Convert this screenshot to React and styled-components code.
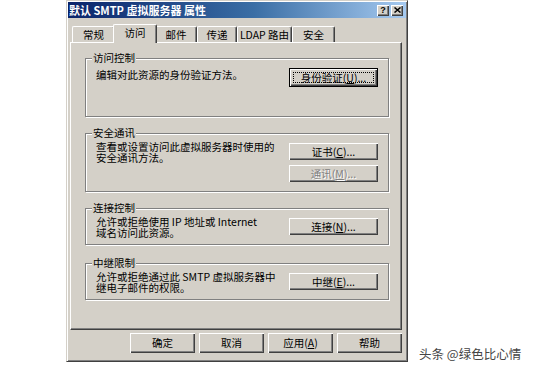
import React from "react";
import styled, { createGlobalStyle, css } from "styled-components";

const Global = createGlobalStyle`
  html, body { margin: 0; padding: 0; background: #fff; }
  body { font-family: "Noto Sans CJK SC", "Noto Sans", sans-serif; }
`;

const FACE = "#d4d0c8";

const Page = styled.div`
  width: 542px;
  height: 374px;
  box-sizing: border-box;
  padding-left: 66px;
  display: flex;
  align-items: flex-start;
  overflow: hidden;
`;

const Dialog = styled.div`
  width: 342px;
  height: 362px;
  box-sizing: border-box;
  background: ${FACE};
  border: 1px solid;
  border-color: ${FACE} #404040 #404040 ${FACE};
  box-shadow: inset 1px 1px 0 #fff, inset -1px -1px 0 #808080;
  padding: 1px;
  display: flex;
  flex-direction: column;
`;

const TitleBar = styled.div`
  height: 16px;
  flex: none;
  display: flex;
  align-items: center;
  padding: 0 3px 0 1px;
  background: linear-gradient(to right, #0a246a, #3a6ea5 55%, #a6caf0);
  color: #fff;
  font-size: 11px;
  font-weight: bold;
  line-height: 16px;
  white-space: nowrap;
`;

const TitleText = styled.span`
  flex: 1;
`;

const CapButtons = styled.div`
  display: flex;
  gap: 2px;
`;

const CapButton = styled.div`
  width: 12px;
  height: 11px;
  box-sizing: border-box;
  background: ${FACE};
  box-shadow: inset 1px 1px 0 #fff, inset -1px -1px 0 #404040, inset -2px -2px 0 #808080;
  display: flex;
  align-items: center;
  justify-content: center;
  color: #000;
  font-family: "Liberation Sans", sans-serif;
  font-size: 9px;
  font-weight: bold;
  line-height: 9px;
`;

const Body = styled.div`
  flex: 1;
  display: flex;
  flex-direction: column;
  padding: 6px 4px 0 2px;
  min-height: 0;
`;

const TabRow = styled.div`
  display: flex;
  align-items: flex-end;
  height: 19px;
  padding-left: 2px;
  margin-bottom: -1px;
  position: relative;
  z-index: 1;
`;

const Tab = styled.div`
  box-sizing: border-box;
  width: ${(p) => p.$w}px;
  height: 16px;
  margin-bottom: 1px;
  background: ${FACE};
  border-top: 1px solid #fff;
  border-left: 1px solid #fff;
  border-right: 1px solid #404040;
  box-shadow: inset -1px 0 0 #808080;
  border-radius: 2px 2px 0 0;
  font-size: 10.5px;
  line-height: 15px;
  text-align: center;
  white-space: nowrap;
  color: #000;
  ${(p) =>
    p.$active &&
    css`
      width: ${p.$w + 4}px;
      height: 19px;
      margin: 0 -2px 0 -2px;
      position: relative;
      z-index: 2;
      line-height: 16px;
    `}
`;

const Panel = styled.div`
  flex: 1;
  box-sizing: border-box;
  border: 1px solid;
  border-color: #fff #404040 #404040 #fff;
  box-shadow: inset -1px -1px 0 #808080;
  padding: 15px 12px 0 14px;
  display: flex;
  flex-direction: column;
  gap: 16px;
`;

const Group = styled.div`
  position: relative;
  box-sizing: border-box;
  height: ${(p) => p.$h}px;
  margin-top: ${(p) => p.$mt || 0}px;
  border: 1px solid #808080;
  box-shadow: 1px 1px 0 #fff, inset 1px 1px 0 #fff;
  padding: 9px 10px 0 10px;
  display: flex;
  justify-content: space-between;
  align-items: flex-start;
`;

const GroupLabel = styled.span`
  position: absolute;
  top: -7px;
  left: 6px;
  padding: 0 1px;
  background: ${FACE};
  font-size: 10.5px;
  line-height: 12px;
  color: #000;
  white-space: nowrap;
`;

const GroupText = styled.div`
  font-size: 10.5px;
  line-height: 11px;
  margin-top: ${(p) => (p.$mt == null ? -2 : p.$mt)}px;
  color: #000;
  white-space: nowrap;
`;

const ButtonCol = styled.div`
  display: flex;
  flex-direction: column;
  gap: 5px;
`;

const Button = styled.button`
  box-sizing: border-box;
  width: ${(p) => p.$w || 89}px;
  height: ${(p) => p.$h || 17}px;
  padding: 0;
  margin: 0;
  border: none;
  background: ${FACE};
  box-shadow: inset 1px 1px 0 #fff, inset -1px -1px 0 #404040, inset -2px -2px 0 #808080;
  font-family: inherit;
  font-size: 10.5px;
  line-height: 12px;
  color: #000;
  display: flex;
  align-items: center;
  justify-content: center;
  white-space: nowrap;
  ${(p) =>
    p.$default &&
    css`
      border: 1px solid #000;
    `}
  &:disabled {
    color: #808080;
    text-shadow: 1px 1px 0 #fff;
  }
`;

const Focus = styled.span`
  display: flex;
  align-items: center;
  justify-content: center;
  box-sizing: border-box;
  width: calc(100% - 6px);
  height: calc(100% - 6px);
  border: 1px dotted #000;
`;

const Footer = styled.div`
  flex: none;
  display: flex;
  justify-content: flex-end;
  gap: 4px;
  padding: 3px 0 7px 0;
`;

const Watermark = styled.div`
  align-self: flex-end;
  margin: 0 0 12px 11px;
  font-size: 12.5px;
  line-height: 16px;
  color: #454545;
  text-shadow: 0 0 1px #fff;
  white-space: nowrap;
`;

const tabs = [
  { t: "常规", w: 43 },
  { t: "访问", w: 40, active: true },
  { t: "邮件", w: 42 },
  { t: "传递", w: 40 },
  { t: "LDAP 路由", w: 55 },
  { t: "安全", w: 43 },
];

export default function App() {
  return (
    <>
      <Global />
      <Page>
        <Dialog>
          <TitleBar>
            <TitleText>默认 SMTP 虚拟服务器 属性</TitleText>
            <CapButtons>
              <CapButton>?</CapButton>
              <CapButton>
                <svg width="7" height="6" viewBox="0 0 7 6">
                  <path d="M0.5 0.5 L6.5 5.5 M6.5 0.5 L0.5 5.5" stroke="#000" strokeWidth="1.5" />
                </svg>
              </CapButton>
            </CapButtons>
          </TitleBar>
          <Body>
            <TabRow>
              {tabs.map((tb) => (
                <Tab key={tb.t} $w={tb.w} $active={tb.active}>
                  {tb.t}
                </Tab>
              ))}
            </TabRow>
            <Panel>
              <Group $h={59}>
                <GroupLabel>访问控制</GroupLabel>
                <GroupText $mt={1}>编辑对此资源的身份验证方法。</GroupText>
                <Button $default $h={19}>
                  <Focus>
                    身份验证(<u>U</u>)...
                  </Focus>
                </Button>
              </Group>
              <Group $h={59}>
                <GroupLabel>安全通讯</GroupLabel>
                <GroupText>
                  查看或设置访问此虚拟服务器时使用的
                  <br />
                  安全通讯方法。
                </GroupText>
                <ButtonCol>
                  <Button>
                    证书(<u>C</u>)...
                  </Button>
                  <Button disabled>
                    通讯(<u>M</u>)...
                  </Button>
                </ButtonCol>
              </Group>
              <Group $h={37}>
                <GroupLabel>连接控制</GroupLabel>
                <GroupText>
                  允许或拒绝使用 IP 地址或 Internet
                  <br />
                  域名访问此资源。
                </GroupText>
                <Button>
                  连接(<u>N</u>)...
                </Button>
              </Group>
              <Group $h={37} $mt={2}>
                <GroupLabel>中继限制</GroupLabel>
                <GroupText>
                  允许或拒绝通过此 SMTP 虚拟服务器中
                  <br />
                  继电子邮件的权限。
                </GroupText>
                <Button>
                  中继(<u>E</u>)...
                </Button>
              </Group>
            </Panel>
            <Footer>
              <Button $w={65} $h={20}>确定</Button>
              <Button $w={65} $h={20}>取消</Button>
              <Button $w={65} $h={20}>
                应用(<u>A</u>)
              </Button>
              <Button $w={65} $h={20}>帮助</Button>
            </Footer>
          </Body>
        </Dialog>
        <Watermark>头条 @绿色比心情</Watermark>
      </Page>
    </>
  );
}
